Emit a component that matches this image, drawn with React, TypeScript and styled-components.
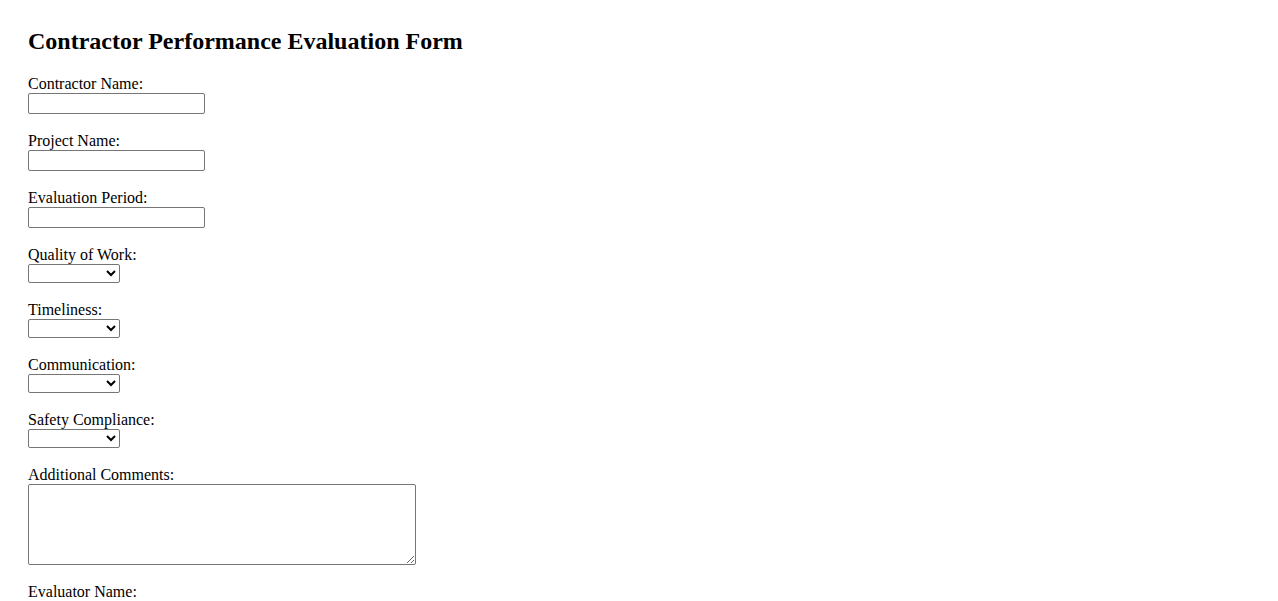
import React from "react";
import styled, { createGlobalStyle } from "styled-components";

const GlobalStyle = createGlobalStyle`
  html, body {
    margin: 0;
    padding: 0;
    background: #ffffff;
  }
  body {
    font-family: "Liberation Serif", "Times New Roman", serif;
    font-size: 16px;
    color: #000000;
  }
`;

const Page = styled.div`
  padding: 27px 28px 20px 28px;
`;

const Title = styled.h2`
  margin: 0 0 20px 0;
  font-size: 24px;
  font-weight: bold;
  line-height: 28px;
`;

const Form = styled.form`
  display: flex;
  flex-direction: column;
`;

const Field = styled.div`
  display: flex;
  flex-direction: column;
  align-items: flex-start;
  margin-bottom: 18px;
`;

const Label = styled.label`
  display: block;
  line-height: 18px;
`;

const TextInput = styled.input`
  box-sizing: border-box;
  width: 177px;
  height: 21px;
  margin: 0;
  padding: 1px 2px;
  border: 1px solid #767676;
  border-radius: 2px;
  font-family: "Liberation Sans", Arial, sans-serif;
  font-size: 13.333px;
  background: #ffffff;
`;

const Select = styled.select`
  box-sizing: border-box;
  width: 92px;
  height: 19px;
  margin: 0;
  border: 1px solid #767676;
  border-radius: 2px;
  font-family: "Liberation Sans", Arial, sans-serif;
  font-size: 13.333px;
  background: #ffffff;
  color: #000000;
`;

const TextArea = styled.textarea`
  box-sizing: border-box;
  width: 388px;
  height: 81px;
  margin: 0;
  padding: 2px;
  border: 1px solid #767676;
  border-radius: 2px;
  font-family: "Liberation Mono", "Courier New", monospace;
  font-size: 13.333px;
  background: #ffffff;
`;

const textFields = [
  { id: "contractorName", label: "Contractor Name:" },
  { id: "projectName", label: "Project Name:" },
  { id: "evaluationPeriod", label: "Evaluation Period:" },
];

const ratingFields = [
  { id: "quality", label: "Quality of Work:" },
  { id: "timeliness", label: "Timeliness:" },
  { id: "communication", label: "Communication:" },
  { id: "safety", label: "Safety Compliance:" },
];

const ratingOptions = ["", "Excellent", "Good", "Fair", "Poor"];

export default function App() {
  return (
    <>
      <GlobalStyle />
      <Page>
        <Title>Contractor Performance Evaluation Form</Title>
        <Form onSubmit={(e) => e.preventDefault()}>
          {textFields.map((f) => (
            <Field key={f.id}>
              <Label htmlFor={f.id}>{f.label}</Label>
              <TextInput type="text" id={f.id} name={f.id} />
            </Field>
          ))}
          {ratingFields.map((f) => (
            <Field key={f.id}>
              <Label htmlFor={f.id}>{f.label}</Label>
              <Select id={f.id} name={f.id} defaultValue="">
                {ratingOptions.map((o) => (
                  <option key={o} value={o}>
                    {o}
                  </option>
                ))}
              </Select>
            </Field>
          ))}
          <Field>
            <Label htmlFor="comments">Additional Comments:</Label>
            <TextArea id="comments" name="comments" />
          </Field>
          <Field>
            <Label htmlFor="evaluatorName">Evaluator Name:</Label>
            <TextInput type="text" id="evaluatorName" name="evaluatorName" />
          </Field>
        </Form>
      </Page>
    </>
  );
}
